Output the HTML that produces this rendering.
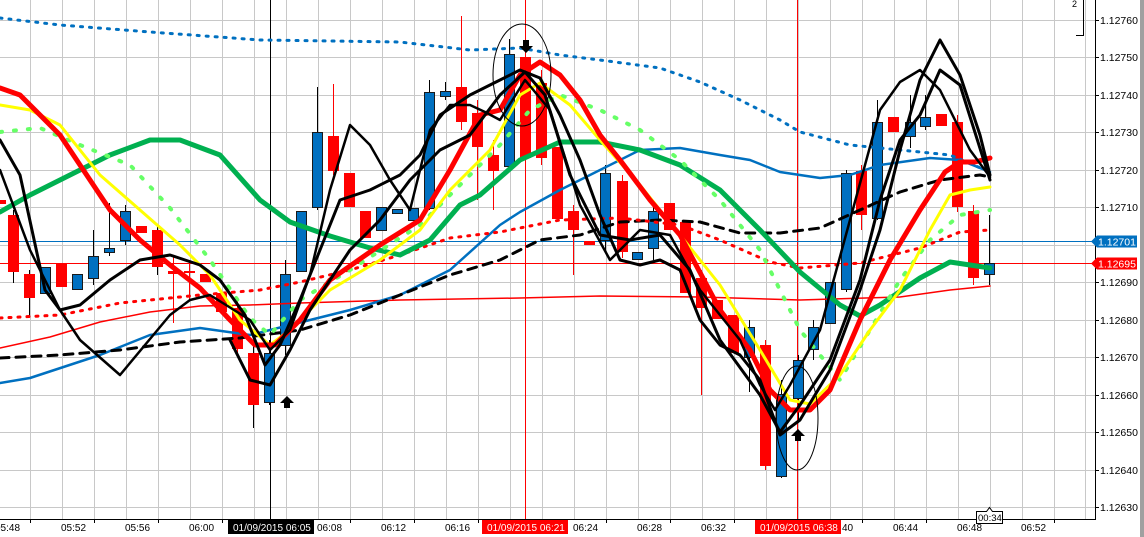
<!DOCTYPE html>
<html><head><meta charset="utf-8"><style>
html,body{margin:0;padding:0;background:#fff;width:1144px;height:537px;overflow:hidden}
svg{display:block;font-family:"Liberation Sans",sans-serif}
</style></head><body>
<svg width="1144" height="537" viewBox="0 0 1144 537" xmlns="http://www.w3.org/2000/svg">
<rect width="1144" height="537" fill="#fff"/>
<g stroke="#c8c8c8" stroke-width="1">
<path d="M30.5 0V519M62.5 0V519M94.5 0V519M126.5 0V519M158.5 0V519M190.5 0V519M222.5 0V519M254.5 0V519M286.5 0V519M318.5 0V519M350.5 0V519M382.5 0V519M414.5 0V519M446.5 0V519M478.5 0V519M510.5 0V519M542.5 0V519M574.5 0V519M606.5 0V519M638.5 0V519M670.5 0V519M702.5 0V519M734.5 0V519M766.5 0V519M798.5 0V519M830.5 0V519M862.5 0V519M894.5 0V519M926.5 0V519M958.5 0V519M990.5 0V519M1022.5 0V519M1054.5 0V519M1085.5 0V519"/>
<path d="M0 20.5H1095M0 57.5H1095M0 95.5H1095M0 132.5H1095M0 170.5H1095M0 207.5H1095M0 245.5H1095M0 282.5H1095M0 320.5H1095M0 357.5H1095M0 395.5H1095M0 432.5H1095M0 470.5H1095M0 507.5H1095"/>
</g>
<path d="M270.5 0V519" stroke="#000"/>
<path d="M525.5 0V519M797.5 0V519" stroke="#f00"/>
<path d="M0 241.5H1095" stroke="#0070c0"/>
<path d="M0 263.5H1095" stroke="#f00"/>
<!-- wicks -->
<g stroke="#000" stroke-width="1">
<path d="M13.5 210V283M29.5 270V316M93.5 230V285M109.5 203V256M125.5 205V245M157.5 225V275M253.5 340V428M269.5 340V405M285.5 260V355M317.5 87V210M429.5 80V210M445.5 82V100M509.5 39V170M605.5 165V250M653.5 205V260M749.5 320V392M781.5 380V478M798.5 355V420M813.5 320V360M846.5 170V292M877.5 100V220M910.5 95V148M925.5 95V130M989.5 215V285"/>
</g>
<g stroke="#f00" stroke-width="1">
<path d="M173.5 255V323M333.5 84V175M461.5 16V130M477.5 100V200M493.5 140V210M525.5 40V165M541.5 70V165M573.5 205V275M622.5 175V258M701.5 270V395M765.5 340V470M861.5 165V230M957.5 115V212M973.5 205V285M189.5 260V300M237.5 300V355"/>
</g>
<!-- candles -->
<g fill="#f00">
<rect x="-1" y="200" width="7" height="4"/>
<rect x="8" y="215" width="11" height="57"/>
<rect x="24" y="274" width="11" height="24"/>
<rect x="56" y="263" width="11" height="24"/>
<rect x="136" y="226" width="11" height="7"/>
<rect x="152" y="230" width="11" height="37"/>
<rect x="168" y="271" width="11" height="3"/>
<rect x="184" y="271" width="11" height="2"/>
<rect x="200" y="274" width="11" height="8"/>
<rect x="216" y="293" width="11" height="19"/>
<rect x="232" y="308" width="11" height="41"/>
<rect x="248" y="353" width="11" height="52"/>
<rect x="328" y="136" width="11" height="35"/>
<rect x="344" y="173" width="11" height="34"/>
<rect x="360" y="211" width="11" height="27"/>
<rect x="456" y="87" width="11" height="35"/>
<rect x="472" y="113" width="11" height="34"/>
<rect x="488" y="155" width="11" height="16"/>
<rect x="520" y="57" width="11" height="101"/>
<rect x="536" y="83" width="11" height="75"/>
<rect x="552" y="147" width="11" height="72"/>
<rect x="568" y="211" width="11" height="19"/>
<rect x="584" y="241" width="11" height="4"/>
<rect x="617" y="181" width="11" height="71"/>
<rect x="664" y="203" width="11" height="27"/>
<rect x="680" y="222" width="11" height="71"/>
<rect x="696" y="278" width="11" height="30"/>
<rect x="712" y="300" width="11" height="19"/>
<rect x="728" y="315" width="11" height="38"/>
<rect x="760" y="345" width="11" height="121"/>
<rect x="856" y="171" width="11" height="44"/>
<rect x="888" y="117" width="11" height="15"/>
<rect x="936" y="114" width="11" height="12"/>
<rect x="952" y="122" width="11" height="85"/>
<rect x="968" y="211" width="11" height="67"/>
</g>
<g fill="#0070c0" stroke="#1a1a1a" stroke-width="1">
<rect x="40.5" y="267.5" width="10" height="26"/>
<rect x="72.5" y="274.5" width="10" height="15"/>
<rect x="88.5" y="256.5" width="10" height="22"/>
<rect x="104.5" y="248.5" width="10" height="4"/>
<rect x="120.5" y="211.5" width="10" height="29"/>
<rect x="264.5" y="353.5" width="10" height="49"/>
<rect x="280.5" y="274.5" width="10" height="71"/>
<rect x="296.5" y="211.5" width="10" height="60"/>
<rect x="312.5" y="132.5" width="10" height="75"/>
<rect x="376.5" y="207.5" width="10" height="23"/>
<rect x="392.5" y="209.5" width="10" height="4"/>
<rect x="408.5" y="208.5" width="10" height="12"/>
<rect x="424.5" y="92.5" width="10" height="116"/>
<rect x="440.5" y="91.5" width="10" height="5"/>
<rect x="504.5" y="54.5" width="10" height="112"/>
<rect x="600.5" y="173.5" width="10" height="67"/>
<rect x="632.5" y="252.5" width="10" height="7"/>
<rect x="648.5" y="211.5" width="10" height="37"/>
<rect x="744.5" y="327.5" width="10" height="30"/>
<rect x="776.5" y="394.5" width="10" height="82"/>
<rect x="793.5" y="360.5" width="10" height="38"/>
<rect x="808.5" y="327.5" width="10" height="22"/>
<rect x="825.5" y="282.5" width="10" height="41"/>
<rect x="841.5" y="173.5" width="10" height="116"/>
<rect x="872.5" y="122.5" width="10" height="96"/>
<rect x="905.5" y="122.5" width="10" height="14"/>
<rect x="920.5" y="117.5" width="10" height="9"/>
<rect x="984.5" y="263.5" width="10" height="11"/>
</g>
<g fill="none" stroke-linejoin="round" stroke-linecap="round">
<!-- blue dotted -->
<polyline stroke="#0070c0" stroke-width="3" stroke-dasharray="2 7" points="0,18 60,25 150,32 260,40 400,42 470,50 520,48 560,55 600,60 660,68 700,82 740,100 780,120 800,132 850,145 900,150 950,155 990,172"/>
<!-- red thin -->
<polyline stroke="#f00" stroke-width="1.5" points="0,348 50,337 100,322 150,312 200,306 250,305 300,303 400,300 520,298 600,296 700,297 800,300 900,297 950,290 990,286"/>
<!-- blue solid -->
<polyline stroke="#0070c0" stroke-width="2.5" points="0,383 30,378 100,355 150,335 200,328 250,335 290,325 350,310 400,295 450,270 500,225 520,212 560,190 580,180 640,150 680,148 720,155 750,160 780,172 820,178 850,175 880,165 930,158 960,160 990,172"/>
<!-- black dashed -->
<polyline stroke="#000" stroke-width="3" stroke-dasharray="9 7" points="0,358 60,355 120,350 180,342 240,338 300,330 350,315 400,295 450,275 500,260 540,240 580,235 620,222 660,220 700,222 740,233 780,233 820,228 860,210 900,192 940,180 980,175 990,177"/>
<!-- red dotted -->
<polyline stroke="#f00" stroke-width="3" stroke-dasharray="2 7" points="0,318 60,315 120,303 200,295 260,290 300,282 350,270 400,255 450,238 500,232 560,220 620,218 680,225 720,240 770,262 800,268 860,263 920,248 960,232 990,230"/>
<!-- green thick -->
<polyline stroke="#00b050" stroke-width="5" points="0,212 30,195 70,175 110,155 150,140 180,140 220,155 260,200 290,222 330,236 370,248 400,255 430,240 460,205 480,195 520,160 560,142 600,142 640,150 680,165 720,190 760,230 800,272 840,305 860,316 880,305 920,278 950,262 990,268"/>
<!-- light green dotted -->
<polyline stroke="#66ff66" stroke-width="4" stroke-dasharray="2 12" points="0,132 40,128 80,145 130,165 170,208 210,260 250,318 270,335 300,300 350,270 420,225 470,175 500,145 530,110 560,95 600,110 640,130 680,160 720,200 760,250 800,330 840,380 870,330 900,280 930,240 960,215 990,210"/>
<!-- yellow -->
<polyline stroke="#ffff00" stroke-width="3" points="0,105 30,110 60,125 100,175 140,210 180,245 210,275 240,320 270,345 290,330 330,290 380,260 420,230 450,190 490,150 520,95 540,83 570,105 600,140 640,185 680,235 720,285 760,350 790,400 810,404 840,375 870,330 900,290 930,230 950,195 970,190 990,187"/>
<!-- red thick -->
<polyline stroke="#f00" stroke-width="5" points="0,88 20,95 60,135 90,180 110,210 140,240 170,265 200,288 230,320 255,345 275,345 300,320 330,280 380,245 420,220 450,170 480,115 500,110 520,75 540,62 560,75 580,100 600,135 620,160 650,200 680,235 720,310 750,350 770,390 790,410 810,410 830,390 860,320 890,260 920,210 945,172 960,162 975,162 990,158"/>
<!-- black lines -->
<polyline stroke="#000" stroke-width="3" points="0,140 20,175 45,290 60,310 80,305 110,280 140,260 170,255 200,265 220,280 245,315 265,365 280,345 300,300 320,250 340,200 370,190 400,175 420,155 440,115 470,95 500,80 520,70 540,78 560,115 580,160 600,215 620,260 640,265 660,260 680,270 700,320 720,345 740,355 760,380 780,435 800,420 830,370 860,290 880,230 900,150 920,80 940,40 960,75 980,135 990,175"/>
<polyline stroke="#000" stroke-width="2.5" points="0,170 30,250 60,310 80,340 120,375 170,315 190,300 210,295 250,320 270,350 290,330 310,275 330,190 350,125 370,145 390,180 410,210 430,130 450,105 470,105 485,112 500,120 525,80 550,110 580,205 610,260 640,230 670,235 700,290 740,340 760,385 775,410 790,385 820,330 850,220 880,110 900,82 920,70 940,90 970,150 990,177"/>
<polyline stroke="#000" stroke-width="3" points="230,340 250,380 270,385 290,350 310,310 330,280 350,250 380,220 410,180 440,150 470,135 500,95 525,72 545,95 570,175 600,235 630,240 660,235 690,270 720,340 760,395 780,432 800,405 830,360 860,280 880,200 900,140 920,115 940,70 960,85 990,180"/>
<ellipse cx="522" cy="75" rx="29" ry="51" stroke="#000" stroke-width="1"/>
<ellipse cx="797" cy="418" rx="21" ry="52" stroke="#000" stroke-width="1"/>
</g>
<!-- arrows -->
<g fill="#000">
<path d="M523 40h6v6h4l-7 7-7-7h4z"/>
<path d="M284 408h6v-5h4l-7-7-7 7h4z"/>
<path d="M795 441h6v-5h4l-7-7-7 7h4z"/>
</g>
<!-- top right bracket -->
<path d="M1083.5 0V35.5H1076" stroke="#000" fill="none"/>
<text x="1072" y="7" font-size="9" fill="#000">2</text>
<!-- right axis -->
<rect x="1096" y="0" width="48" height="537" fill="#fff"/>
<rect x="1140" y="0" width="4" height="537" fill="#a0a0a0"/>
<path d="M1095.5 0V519.5H0" stroke="#000" fill="none"/>
<g stroke="#000"><path d="M1095 20.5h4M1095 57.5h4M1095 95.5h4M1095 132.5h4M1095 170.5h4M1095 207.5h4M1095 282.5h4M1095 320.5h4M1095 357.5h4M1095 395.5h4M1095 432.5h4M1095 470.5h4M1095 507.5h4"/></g>
<g font-size="10.5" fill="#000">
<text x="1100" y="24">1.12760</text>
<text x="1100" y="61">1.12750</text>
<text x="1100" y="99">1.12740</text>
<text x="1100" y="136">1.12730</text>
<text x="1100" y="174">1.12720</text>
<text x="1100" y="211">1.12710</text>
<text x="1100" y="286">1.12690</text>
<text x="1100" y="324">1.12680</text>
<text x="1100" y="361">1.12670</text>
<text x="1100" y="399">1.12660</text>
<text x="1100" y="436">1.12650</text>
<text x="1100" y="474">1.12640</text>
<text x="1100" y="511">1.12630</text>
</g>
<path d="M1091 241.5l6-6h40v12h-40z" fill="#0070c0"/>
<text x="1098" y="245.5" font-size="10.5" fill="#fff">1.12701</text>
<path d="M1091 263.5l6-6h40v12h-40z" fill="#f00"/>
<text x="1098" y="267.5" font-size="10.5" fill="#fff">1.12695</text>
<!-- bottom axis -->
<g stroke="#000"><path d="M30.5 519v4M94.5 519v4M158.5 519v4M222.5 519v4M350.5 519v4M414.5 519v4M478.5 519v4M606.5 519v4M670.5 519v4M734.5 519v4M862.5 519v4M926.5 519v4M990.5 519v4M1054.5 519v4"/></g>
<g font-size="10" fill="#000">
<text x="-5" y="531">05:48</text>
<text x="61" y="531">05:52</text>
<text x="125" y="531">05:56</text>
<text x="189" y="531">06:00</text>
<text x="317" y="531">06:08</text>
<text x="381" y="531">06:12</text>
<text x="445" y="531">06:16</text>
<text x="573" y="531">06:24</text>
<text x="637" y="531">06:28</text>
<text x="701" y="531">06:32</text>
<text x="842" y="531">40</text>
<text x="893" y="531">06:44</text>
<text x="957" y="531">06:48</text>
<text x="1021" y="531">06:52</text>
</g>
<rect x="228" y="520" width="86" height="14" fill="#000"/>
<text x="233" y="531" font-size="10" fill="#fff">01/09/2015 06:05</text>
<rect x="482" y="520" width="86" height="14" fill="#f00"/>
<text x="487" y="531" font-size="10" fill="#fff">01/09/2015 06:21</text>
<rect x="755" y="520" width="86" height="14" fill="#f00"/>
<text x="760" y="531" font-size="10" fill="#fff">01/09/2015 06:38</text>
<path d="M976.5 511.5h10l3-4 3 4h10v12h-26z" fill="#fff" stroke="#000"/>
<text x="978" y="521" font-size="9.5" fill="#000">00:34</text>
</svg>
</body></html>
